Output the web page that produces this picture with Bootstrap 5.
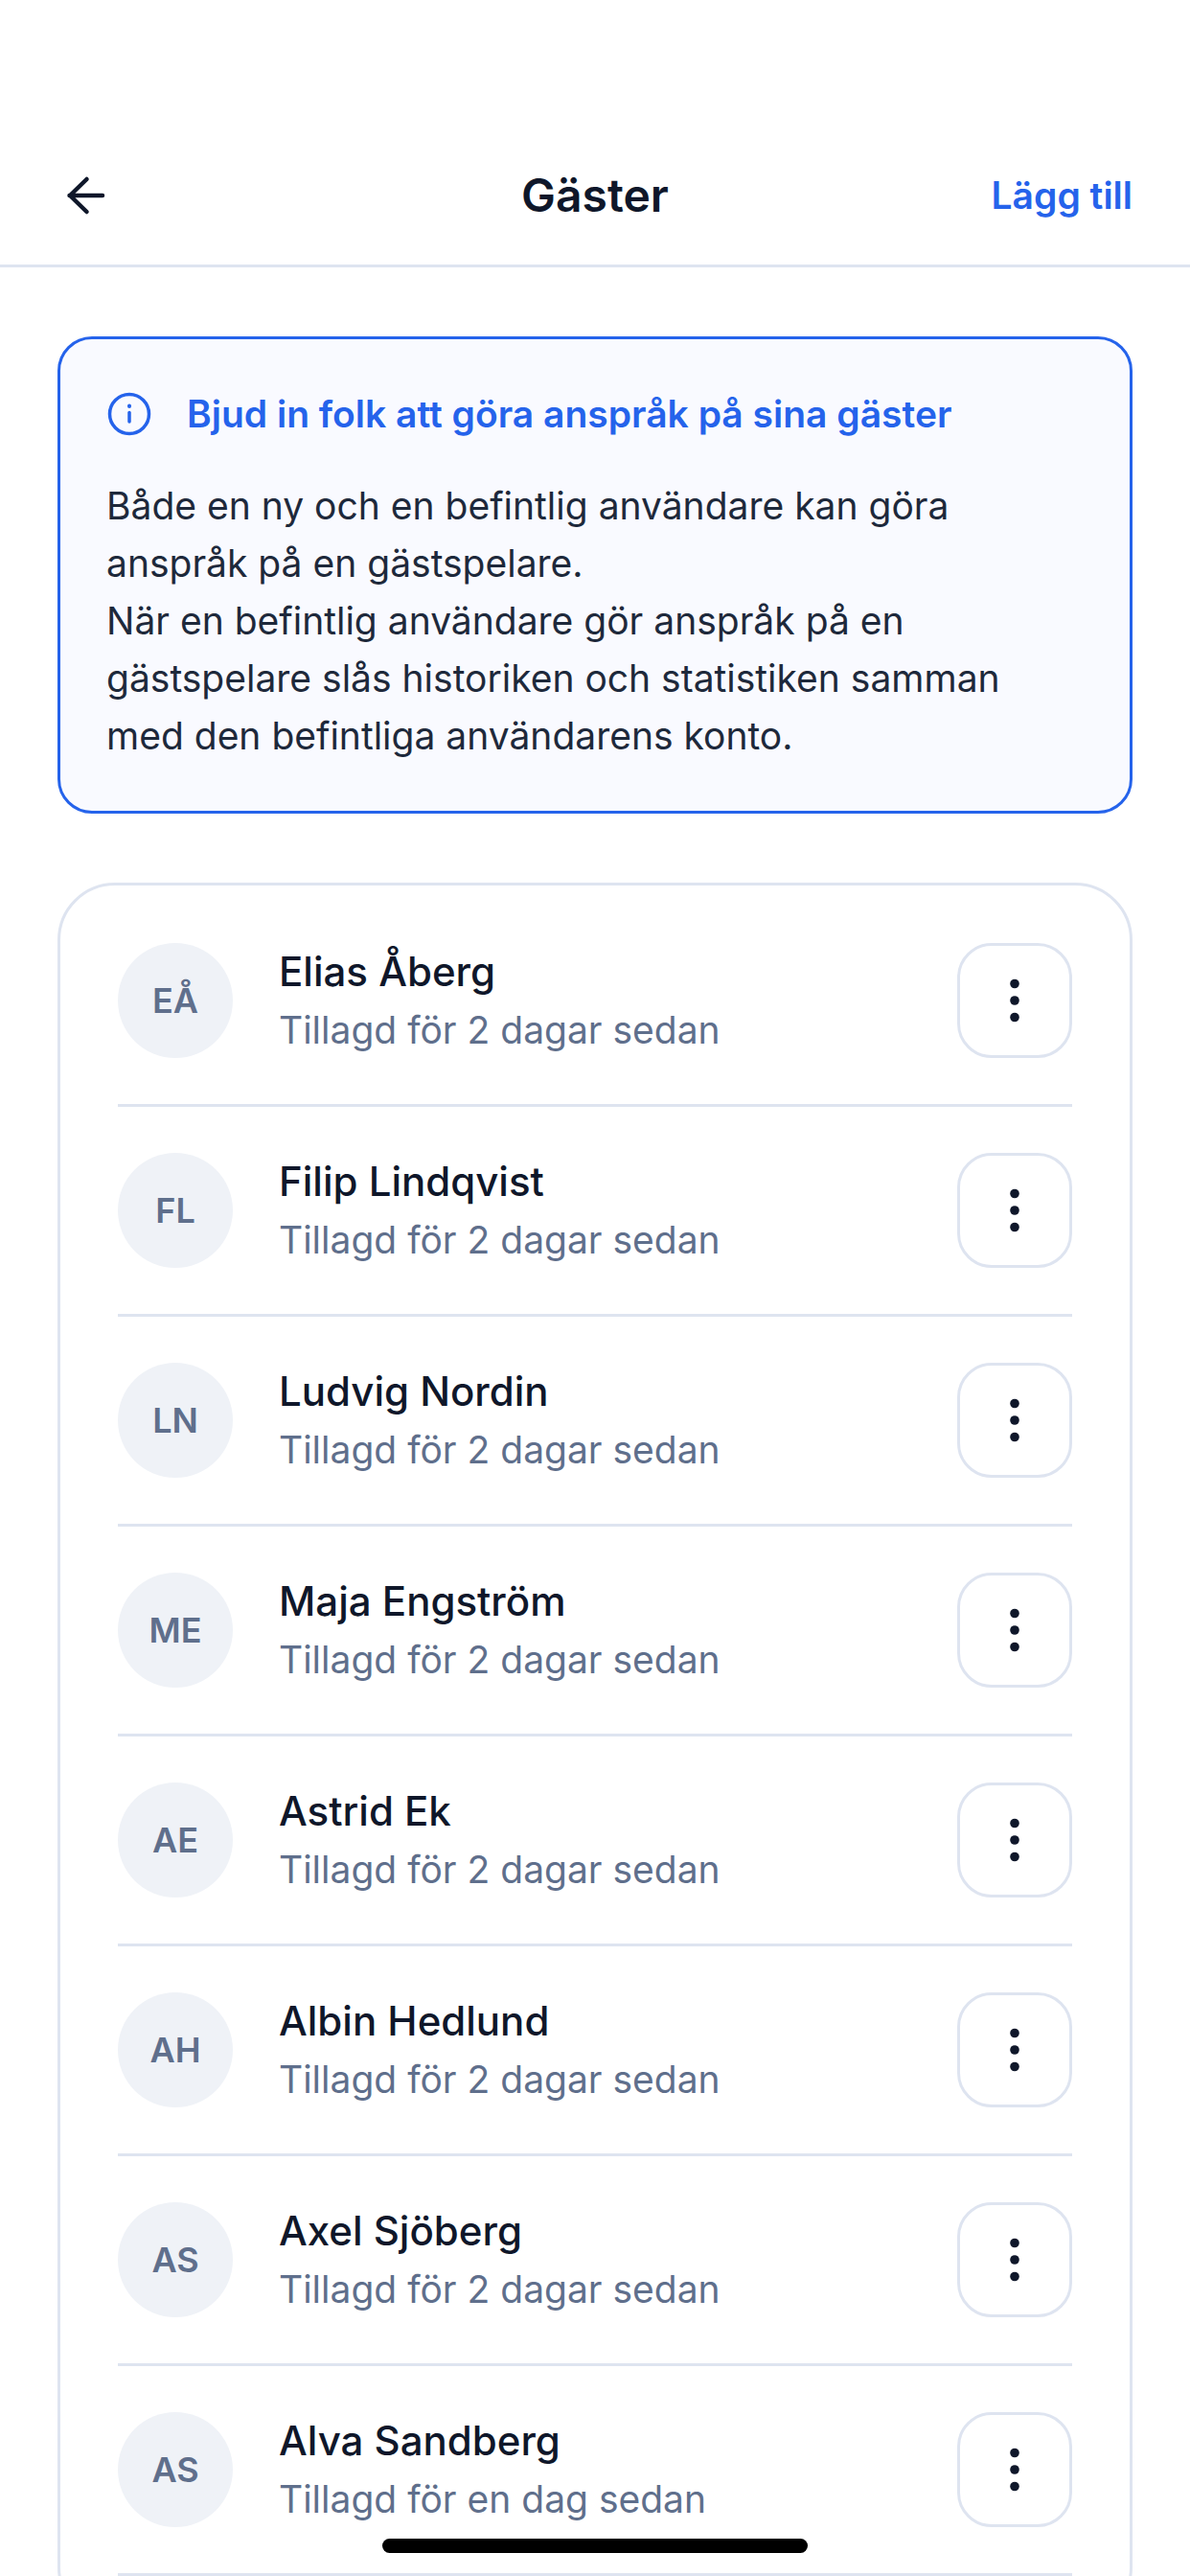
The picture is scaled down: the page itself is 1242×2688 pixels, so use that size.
<!DOCTYPE html>
<html lang="sv">
<head>
<meta charset="utf-8">
<title>Gäster</title>
<link href="https://cdn.jsdelivr.net/npm/bootstrap@5.3.0/dist/css/bootstrap.min.css" rel="stylesheet">
<style>
html,body{height:2688px;overflow:hidden;background:#fff}
body{font-family:Inter,"Noto Sans",sans-serif;color:#0f172a;position:relative}
.top-bar{height:279px;padding:132px 60px 0 60px;border-bottom:3px solid #dee4f0}
.top-row{height:144px;position:relative}
.back-btn{width:60px;height:60px;margin-left:0;line-height:0}
.page-title{position:absolute;left:0;right:0;text-align:center;font-size:48px;font-weight:600;line-height:60px;margin:0;color:#0f172a}
.add-link{font-size:39px;font-weight:600;line-height:48px;color:#2563eb;text-decoration:none;position:relative}
.page-main{padding:72px 60px 0}
.info-box{height:498px;background:#f9faff;border:3px solid #2563eb;border-radius:36px;padding:48px 48px;margin-bottom:72px}
.info-head{color:#2563eb;font-size:39px;font-weight:600;line-height:60px;gap:36px;height:60px;margin-bottom:36px}
.info-body{font-size:39px;line-height:60px;color:#1e293b;margin:0}
.guest-box{background:#fff;border:3px solid #dee4f0;border-radius:60px;padding:60px 60px 0}
.guest-row{padding-bottom:48px;margin-bottom:48px;border-bottom:3px solid #dee4f0;gap:48px}
.avatar-dot{width:120px;height:120px;background:#eff2f7;color:#5f6f8c;font-size:36px;font-weight:600}
.guest-name{font-size:42px;font-weight:500;line-height:60px;color:#0f172a}
.guest-sub{font-size:39px;line-height:60px;color:#5f6f8c;margin-top:1px;margin-bottom:-1px}
.more-btn{width:120px;height:120px;border:3px solid #dee4f0;border-radius:36px;background:#fff;padding:0}
.home-bar{position:absolute;left:399px;top:2649px;width:444px;height:15px;background:#000;border-radius:8px}
</style>
</head>
<body>
<header class="top-bar">
  <div class="top-row d-flex align-items-center justify-content-between">
    <h1 class="page-title">Gäster</h1>
    <a class="back-btn d-inline-flex align-items-center" href="#" aria-label="Tillbaka">
      <svg width="60" height="60" viewBox="0 0 60 60" fill="none" stroke="#0f172a" stroke-width="4.5" stroke-linecap="round" stroke-linejoin="round"><path d="M47 30H12.5M30.5 13 13 30l17.5 17"/></svg>
    </a>
    <a class="add-link" href="#">Lägg till</a>
  </div>
</header>
<main class="page-main">
  <section class="info-box">
    <div class="info-head d-flex align-items-center">
      <svg width="48" height="48" viewBox="0 0 48 48" fill="none" stroke="#2563eb" stroke-width="3.5" stroke-linecap="round"><circle cx="24" cy="24" r="20.5"/><path d="M24 22.5V32"/><path d="M24 15.5v.5" stroke-width="4"/></svg>
      <span>Bjud in folk att göra anspråk på sina gäster</span>
    </div>
    <p class="info-body">Både en ny och en befintlig användare kan göra anspråk på en gästspelare.<br>När en befintlig användare gör anspråk på en gästspelare slås historiken och statistiken samman med den befintliga användarens konto.</p>
  </section>
  <section class="guest-box" id="guests">
    <div class="guest-row d-flex align-items-center"><div class="avatar-dot rounded-circle d-flex align-items-center justify-content-center flex-shrink-0">EÅ</div><div class="flex-grow-1"><div class="guest-name">Elias Åberg</div><div class="guest-sub">Tillagd för 2 dagar sedan</div></div><button class="more-btn d-flex align-items-center justify-content-center" aria-label="Mer"><svg width="12" height="46" viewBox="0 0 12 46" fill="#0f172a"><circle cx="6" cy="5.5" r="4.8"/><circle cx="6" cy="23" r="4.8"/><circle cx="6" cy="40.5" r="4.8"/></svg></button></div>
    <div class="guest-row d-flex align-items-center"><div class="avatar-dot rounded-circle d-flex align-items-center justify-content-center flex-shrink-0">FL</div><div class="flex-grow-1"><div class="guest-name">Filip Lindqvist</div><div class="guest-sub">Tillagd för 2 dagar sedan</div></div><button class="more-btn d-flex align-items-center justify-content-center" aria-label="Mer"><svg width="12" height="46" viewBox="0 0 12 46" fill="#0f172a"><circle cx="6" cy="5.5" r="4.8"/><circle cx="6" cy="23" r="4.8"/><circle cx="6" cy="40.5" r="4.8"/></svg></button></div>
    <div class="guest-row d-flex align-items-center"><div class="avatar-dot rounded-circle d-flex align-items-center justify-content-center flex-shrink-0">LN</div><div class="flex-grow-1"><div class="guest-name">Ludvig Nordin</div><div class="guest-sub">Tillagd för 2 dagar sedan</div></div><button class="more-btn d-flex align-items-center justify-content-center" aria-label="Mer"><svg width="12" height="46" viewBox="0 0 12 46" fill="#0f172a"><circle cx="6" cy="5.5" r="4.8"/><circle cx="6" cy="23" r="4.8"/><circle cx="6" cy="40.5" r="4.8"/></svg></button></div>
    <div class="guest-row d-flex align-items-center"><div class="avatar-dot rounded-circle d-flex align-items-center justify-content-center flex-shrink-0">ME</div><div class="flex-grow-1"><div class="guest-name">Maja Engström</div><div class="guest-sub">Tillagd för 2 dagar sedan</div></div><button class="more-btn d-flex align-items-center justify-content-center" aria-label="Mer"><svg width="12" height="46" viewBox="0 0 12 46" fill="#0f172a"><circle cx="6" cy="5.5" r="4.8"/><circle cx="6" cy="23" r="4.8"/><circle cx="6" cy="40.5" r="4.8"/></svg></button></div>
    <div class="guest-row d-flex align-items-center"><div class="avatar-dot rounded-circle d-flex align-items-center justify-content-center flex-shrink-0">AE</div><div class="flex-grow-1"><div class="guest-name">Astrid Ek</div><div class="guest-sub">Tillagd för 2 dagar sedan</div></div><button class="more-btn d-flex align-items-center justify-content-center" aria-label="Mer"><svg width="12" height="46" viewBox="0 0 12 46" fill="#0f172a"><circle cx="6" cy="5.5" r="4.8"/><circle cx="6" cy="23" r="4.8"/><circle cx="6" cy="40.5" r="4.8"/></svg></button></div>
    <div class="guest-row d-flex align-items-center"><div class="avatar-dot rounded-circle d-flex align-items-center justify-content-center flex-shrink-0">AH</div><div class="flex-grow-1"><div class="guest-name">Albin Hedlund</div><div class="guest-sub">Tillagd för 2 dagar sedan</div></div><button class="more-btn d-flex align-items-center justify-content-center" aria-label="Mer"><svg width="12" height="46" viewBox="0 0 12 46" fill="#0f172a"><circle cx="6" cy="5.5" r="4.8"/><circle cx="6" cy="23" r="4.8"/><circle cx="6" cy="40.5" r="4.8"/></svg></button></div>
    <div class="guest-row d-flex align-items-center"><div class="avatar-dot rounded-circle d-flex align-items-center justify-content-center flex-shrink-0">AS</div><div class="flex-grow-1"><div class="guest-name">Axel Sjöberg</div><div class="guest-sub">Tillagd för 2 dagar sedan</div></div><button class="more-btn d-flex align-items-center justify-content-center" aria-label="Mer"><svg width="12" height="46" viewBox="0 0 12 46" fill="#0f172a"><circle cx="6" cy="5.5" r="4.8"/><circle cx="6" cy="23" r="4.8"/><circle cx="6" cy="40.5" r="4.8"/></svg></button></div>
    <div class="guest-row d-flex align-items-center"><div class="avatar-dot rounded-circle d-flex align-items-center justify-content-center flex-shrink-0">AS</div><div class="flex-grow-1"><div class="guest-name">Alva Sandberg</div><div class="guest-sub">Tillagd för en dag sedan</div></div><button class="more-btn d-flex align-items-center justify-content-center" aria-label="Mer"><svg width="12" height="46" viewBox="0 0 12 46" fill="#0f172a"><circle cx="6" cy="5.5" r="4.8"/><circle cx="6" cy="23" r="4.8"/><circle cx="6" cy="40.5" r="4.8"/></svg></button></div>
  </section>
</main>
<div class="home-bar"></div>
<script src="https://cdn.jsdelivr.net/npm/bootstrap@5.3.0/dist/js/bootstrap.bundle.min.js"></script>
</body>
</html>
